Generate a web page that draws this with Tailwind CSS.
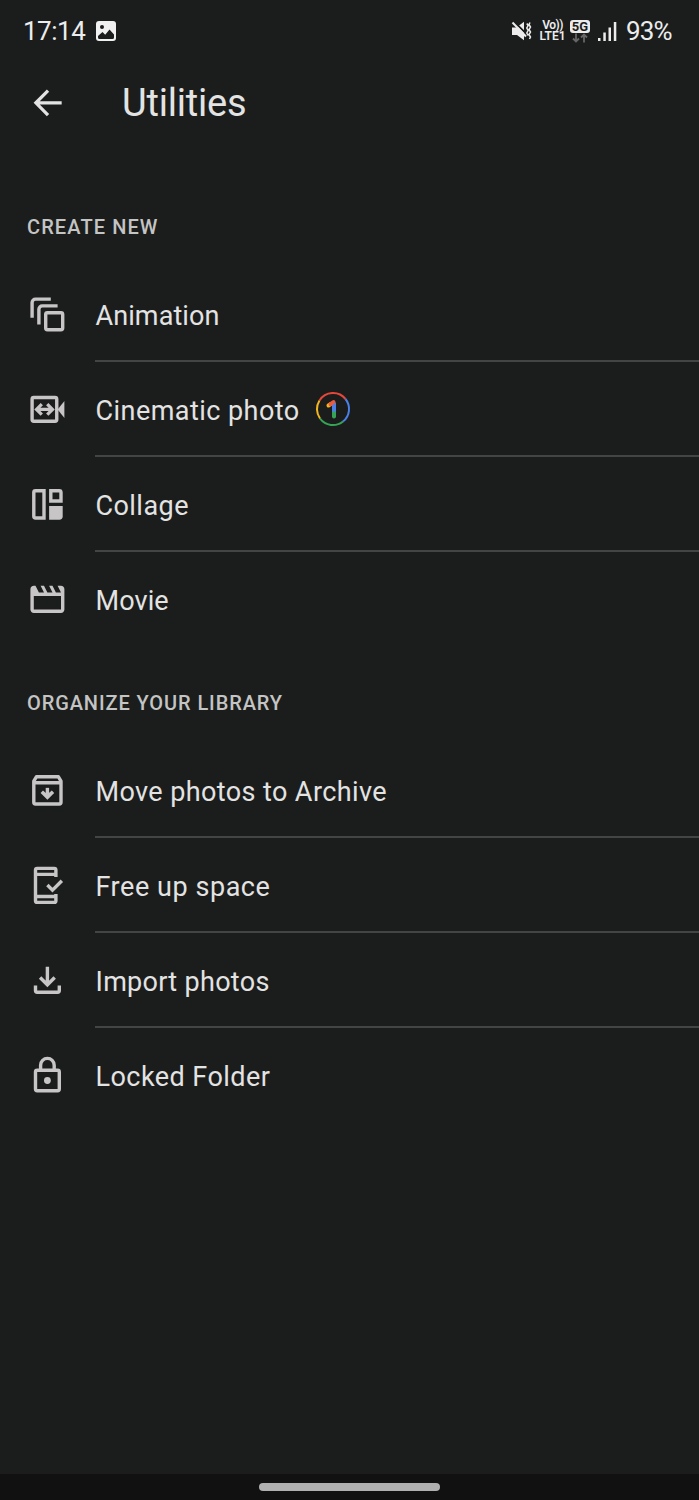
<!DOCTYPE html>
<html lang="en">
<head>
    <meta charset="UTF-8">
    <meta name="viewport" content="width=device-width, initial-scale=1.0">
    <title>Utilities</title>
    <script src="https://cdn.jsdelivr.net/npm/@tailwindcss/browser@4"></script>
</head>
<body class="bg-[#1b1d1c] font-['Roboto',sans-serif] text-[#e3e3e3]">
    <div class="flex h-[1500px] w-full flex-col overflow-hidden">
        <!-- Status bar -->
        <div class="flex h-[62px] shrink-0 items-center justify-between pr-[27px] pl-[23px] text-[#ececec]">
            <div class="flex items-center gap-[10px]">
                <span class="w-[63px] text-[26px] whitespace-nowrap tracking-[-0.500px]">17:14</span>
                <svg class="h-5 w-5" viewBox="0 0 20 20">
                    <rect width="20" height="20" rx="3" fill="#f0f0f0"/>
                    <circle cx="6" cy="6" r="2" fill="#1b1d1c"/>
                    <path d="M2 15L6.500 11l2.700 2.700L13.500 8.500l4.500 5V16.500a1.500 1.500 0 0 1-1.500 1.500h-13A1.500 1.500 0 0 1 2 16.500z" fill="#1b1d1c"/>
                </svg>
            </div>
            <div class="flex items-center">
                <!-- Muted -->
                <svg class="mr-[7px] h-5 w-[21px]" viewBox="0 0 21 20">
                    <path d="M1 6.500h4.500L13 .8v18.400L6 14H1z" fill="#ececec"/>
                    <path d="M3 .5l14 14" stroke="#1b1d1c" stroke-width="1.800"/>
                    <path d="M1.500 1.500L15 15.500" stroke="#ececec" stroke-width="2"/>
                    <path d="M15.800 2.500l1.300 2-1.300 2.500 1.300 2.500-1.300 2.500 1.300 2.500M19 1.500l-1 2 1.500 2.500-1.500 2.500 1.500 2.500-1.500 2.500 1.500 2.500-1 2" fill="none" stroke="#ececec" stroke-width="1.500"/>
                </svg>
                <div class="mr-1 flex w-[27px] flex-col items-center text-[12px] leading-[11px] font-semibold">
                    <span class="whitespace-nowrap tracking-[-0.500px]">Vo))</span>
                    <span class="whitespace-nowrap">LTE1</span>
                </div>
                <div class="mr-2 flex w-5 flex-col items-center">
                    <span class="flex h-[13px] w-5 items-center justify-center rounded-[3px] bg-[#ececec] text-[13px] leading-none font-bold text-[#1b1d1c]">5G</span>
                    <svg class="h-[10px] w-4" viewBox="0 0 16 10">
                        <path d="M4 .5v8M1 5.500l3 3 3-3M12 9.500v-8M9 4.500l3-3 3 3" fill="none" stroke="#666" stroke-width="1.800"/>
                    </svg>
                </div>
                <svg class="mr-[9px] h-[19px] w-[19px]" viewBox="0 0 19 19" fill="#ececec">
                    <rect x="0" y="16" width="2.500" height="3"/>
                    <rect x="5.300" y="10.500" width="2.500" height="8.500"/>
                    <rect x="10.500" y="5.500" width="2.500" height="13.500"/>
                    <rect x="15.800" y="0" width="2.500" height="19"/>
                </svg>
                <span class="w-[46px] text-[26px] whitespace-nowrap tracking-[-0.900px]">93%</span>
            </div>
        </div>

        <!-- App bar -->
        <header class="flex h-[109.200px] shrink-0 items-start pt-[17px] pl-[27px]">
            <svg class="mt-[3px] mr-[54px] h-[41px] w-[41px]" viewBox="0 0 24 24">
                <path d="M20.300 12.200H5.500M12.300 5L5.200 12.200l7.100 7.200" fill="none" stroke="#e3e3e3" stroke-width="1.900"/>
            </svg>
            <h1 class="text-[38px] leading-[48px] tracking-[-0.200px]">Utilities</h1>
        </header>

        <!-- Create new -->
        <section class="shrink-0 text-[27px]">
            <h2 class="flex h-[95.200px] items-center pt-4 pl-[27px] text-[20px] font-medium text-[#c4c4c4]"><span class="tracking-[1.100px]">CREATE NEW</span></h2>
            <ul>
                <li class="flex h-[95.200px] pl-[27.200px]">
                    <div class="w-[68.300px] pt-[27.500px]">
                        <svg class="h-[40.800px] w-[40.800px]" viewBox="0 0 24 24" fill="none" stroke="#c7c5c5" stroke-width="2">
                            <path d="M3 14V5a2 2 0 0 1 2-2h9M7 18V9a2 2 0 0 1 2-2h9"/>
                            <rect x="11" y="11" width="10" height="10" rx="1"/>
                        </svg>
                    </div>
                    <div class="flex flex-1 items-center border-b-2 border-[#434544] pt-[6px]"><span class="tracking-[0.100px]">Animation</span></div>
                </li>
                <li class="flex h-[95.200px] pl-[27.200px]">
                    <div class="w-[68.300px] pt-[27.500px]">
                        <svg class="h-[40.800px] w-[40.800px]" viewBox="0 0 24 24" fill="none" stroke="#c7c5c5" stroke-width="2">
                            <rect x="3" y="5" width="14.500" height="14" rx="1"/>
                            <path d="M18 12l4-5v10z" fill="#c7c5c5" stroke="none"/>
                            <path d="M6 12h8.500M8.700 8.900L5.600 12l3.100 3.100M11.900 8.900l3.100 3.100-3.100 3.100" stroke-width="1.900"/>
                        </svg>
                    </div>
                    <div class="flex flex-1 items-center border-b-2 border-[#434544] pt-[6px]">
                        <span class="w-[220px] tracking-[0.450px]">Cinematic photo</span>
                        <svg class="mb-[4px] h-9 w-9" viewBox="0 0 36 36" fill="none" stroke-width="2">
                            <path d="M4.500 9.500A16 16 0 0 1 30.500 8" stroke="#e5483b"/>
                            <path d="M30.500 8A16 16 0 0 1 28 30.500" stroke="#4a80e8"/>
                            <path d="M28 30.500A16 16 0 0 1 5 27.500" stroke="#35a456"/>
                            <path d="M5 27.500A16 16 0 0 1 4.500 9.500" stroke="#f4b51e"/>
                            <g stroke-width="4" stroke-linecap="round">
                                <path d="M19 19v6.500" stroke="#35a456"/>
                                <path d="M19 11.500v9" stroke="#4a80e8" stroke-linecap="butt"/>
                                <path d="M13.500 14.500l2-1.400" stroke="#f4b51e"/>
                                <path d="M15.500 13.200l3-2.200" stroke="#ec5a3c"/>
                            </g>
                        </svg>
                    </div>
                </li>
                <li class="flex h-[95.200px] pl-[27.200px]">
                    <div class="w-[68.300px] pt-[27.500px]">
                        <svg class="h-[40.800px] w-[40.800px]" viewBox="0 0 24 24" fill="#c7c5c5">
                            <path fill-rule="evenodd" d="M5 3h6v18H5a2 2 0 0 1-2-2V5a2 2 0 0 1 2-2zm0 2v14h4V5zM13 3h6a2 2 0 0 1 2 2v6h-8zm2 2v4h4V5z"/>
                            <path d="M13 13h8v6a2 2 0 0 1-2 2h-6z"/>
                        </svg>
                    </div>
                    <div class="flex flex-1 items-center border-b-2 border-[#434544] pt-[6px]"><span class="tracking-[0.450px]">Collage</span></div>
                </li>
                <li class="flex h-[95.200px] pl-[27.200px]">
                    <div class="w-[68.300px] pt-[27.500px]">
                        <svg class="h-[40.800px] w-[40.800px]" viewBox="0 0 24 24" fill="#c7c5c5">
                            <path d="M18 4l2 4h-3l-2-4h-2l2 4h-3l-2-4H8l2 4H7L5 4H4c-1.100 0-1.990.9-1.990 2L2 18c0 1.100.9 2 2 2h16c1.100 0 2-.9 2-2V6c0-1.100-.9-2-2-2zm2 14H4V10h16z"/>
                        </svg>
                    </div>
                    <div class="flex flex-1 items-center border-b-2 border-transparent pt-[6px]"><span class="tracking-[0.100px]">Movie</span></div>
                </li>
            </ul>
        </section>

        <!-- Organize your library -->
        <section class="flex-1 text-[27px]">
            <h2 class="flex h-[95.200px] items-center pt-4 pl-[27px] text-[20px] font-medium text-[#c4c4c4]"><span class="tracking-[0.900px]">ORGANIZE YOUR LIBRARY</span></h2>
            <ul>
                <li class="flex h-[95.200px] pl-[27.200px]">
                    <div class="w-[68.300px] pt-[27.500px]">
                        <svg class="h-[40.800px] w-[40.800px]" viewBox="0 0 24 24" fill="none" stroke="#c7c5c5" stroke-width="2">
                            <path d="M4 6.500L5.500 4h13L20 6.500V19a1 1 0 0 1-1 1H5a1 1 0 0 1-1-1zM4 7.500h16" stroke-linejoin="round"/>
                            <path d="M12 10.500v4"/>
                            <path d="M8 13.500l1.400-1.400L12 14.200l2.600-2.100L16 13.500l-4 4z" fill="#c7c5c5" stroke="none"/>
                        </svg>
                    </div>
                    <div class="flex flex-1 items-center border-b-2 border-[#434544] pt-[6px]"><span class="tracking-[0.400px]">Move photos to Archive</span></div>
                </li>
                <li class="flex h-[95.200px] pl-[27.200px]">
                    <div class="w-[68.300px] pt-[27.500px]">
                        <svg class="h-[40.800px] w-[40.800px]" viewBox="0 0 24 24" fill="none" stroke="#c7c5c5" stroke-width="2">
                            <path d="M17 7V3a1 1 0 0 0-1-1H6a1 1 0 0 0-1 1v18a1 1 0 0 0 1 1h10a1 1 0 0 0 1-1v-4"/>
                            <path d="M5 5.500h12M5 18.500h12"/>
                            <path d="M12 11.800l3 3 5.500-5.500"/>
                        </svg>
                    </div>
                    <div class="flex flex-1 items-center border-b-2 border-[#434544] pt-[6px]"><span class="tracking-[0.550px]">Free up space</span></div>
                </li>
                <li class="flex h-[95.200px] pl-[27.200px]">
                    <div class="w-[68.300px] pt-[27.500px]">
                        <svg class="h-[40.800px] w-[40.800px]" viewBox="0 0 24 24" fill="none" stroke="#c7c5c5" stroke-width="2">
                            <path d="M12 4v10.500M7.700 10.300l4.300 4.300 4.300-4.300M5 15v3a1 1 0 0 0 1 1h12a1 1 0 0 0 1-1v-3"/>
                        </svg>
                    </div>
                    <div class="flex flex-1 items-center border-b-2 border-[#434544] pt-[6px]"><span class="tracking-[0.300px]">Import photos</span></div>
                </li>
                <li class="flex h-[95.200px] pl-[27.200px]">
                    <div class="w-[68.300px] pt-[27.500px]">
                        <svg class="h-[40.800px] w-[40.800px]" viewBox="0 0 24 24" fill="none" stroke="#c7c5c5" stroke-width="2">
                            <rect x="5" y="9" width="14" height="12" rx="1"/>
                            <path d="M8 9V6a4 4 0 0 1 8 0v3"/>
                            <circle cx="12" cy="15" r="2" fill="#c7c5c5" stroke="none"/>
                        </svg>
                    </div>
                    <div class="flex flex-1 items-center border-b-2 border-transparent pt-[6px]"><span class="tracking-[0.450px]">Locked Folder</span></div>
                </li>
            </ul>
        </section>

        <!-- Gesture bar -->
        <div class="flex h-[26px] shrink-0 justify-center bg-[#111111] pt-[9px]">
            <div class="h-2 w-[181px] rounded-full bg-[#b0b0b0]"></div>
        </div>
    </div>
</body>
</html>
